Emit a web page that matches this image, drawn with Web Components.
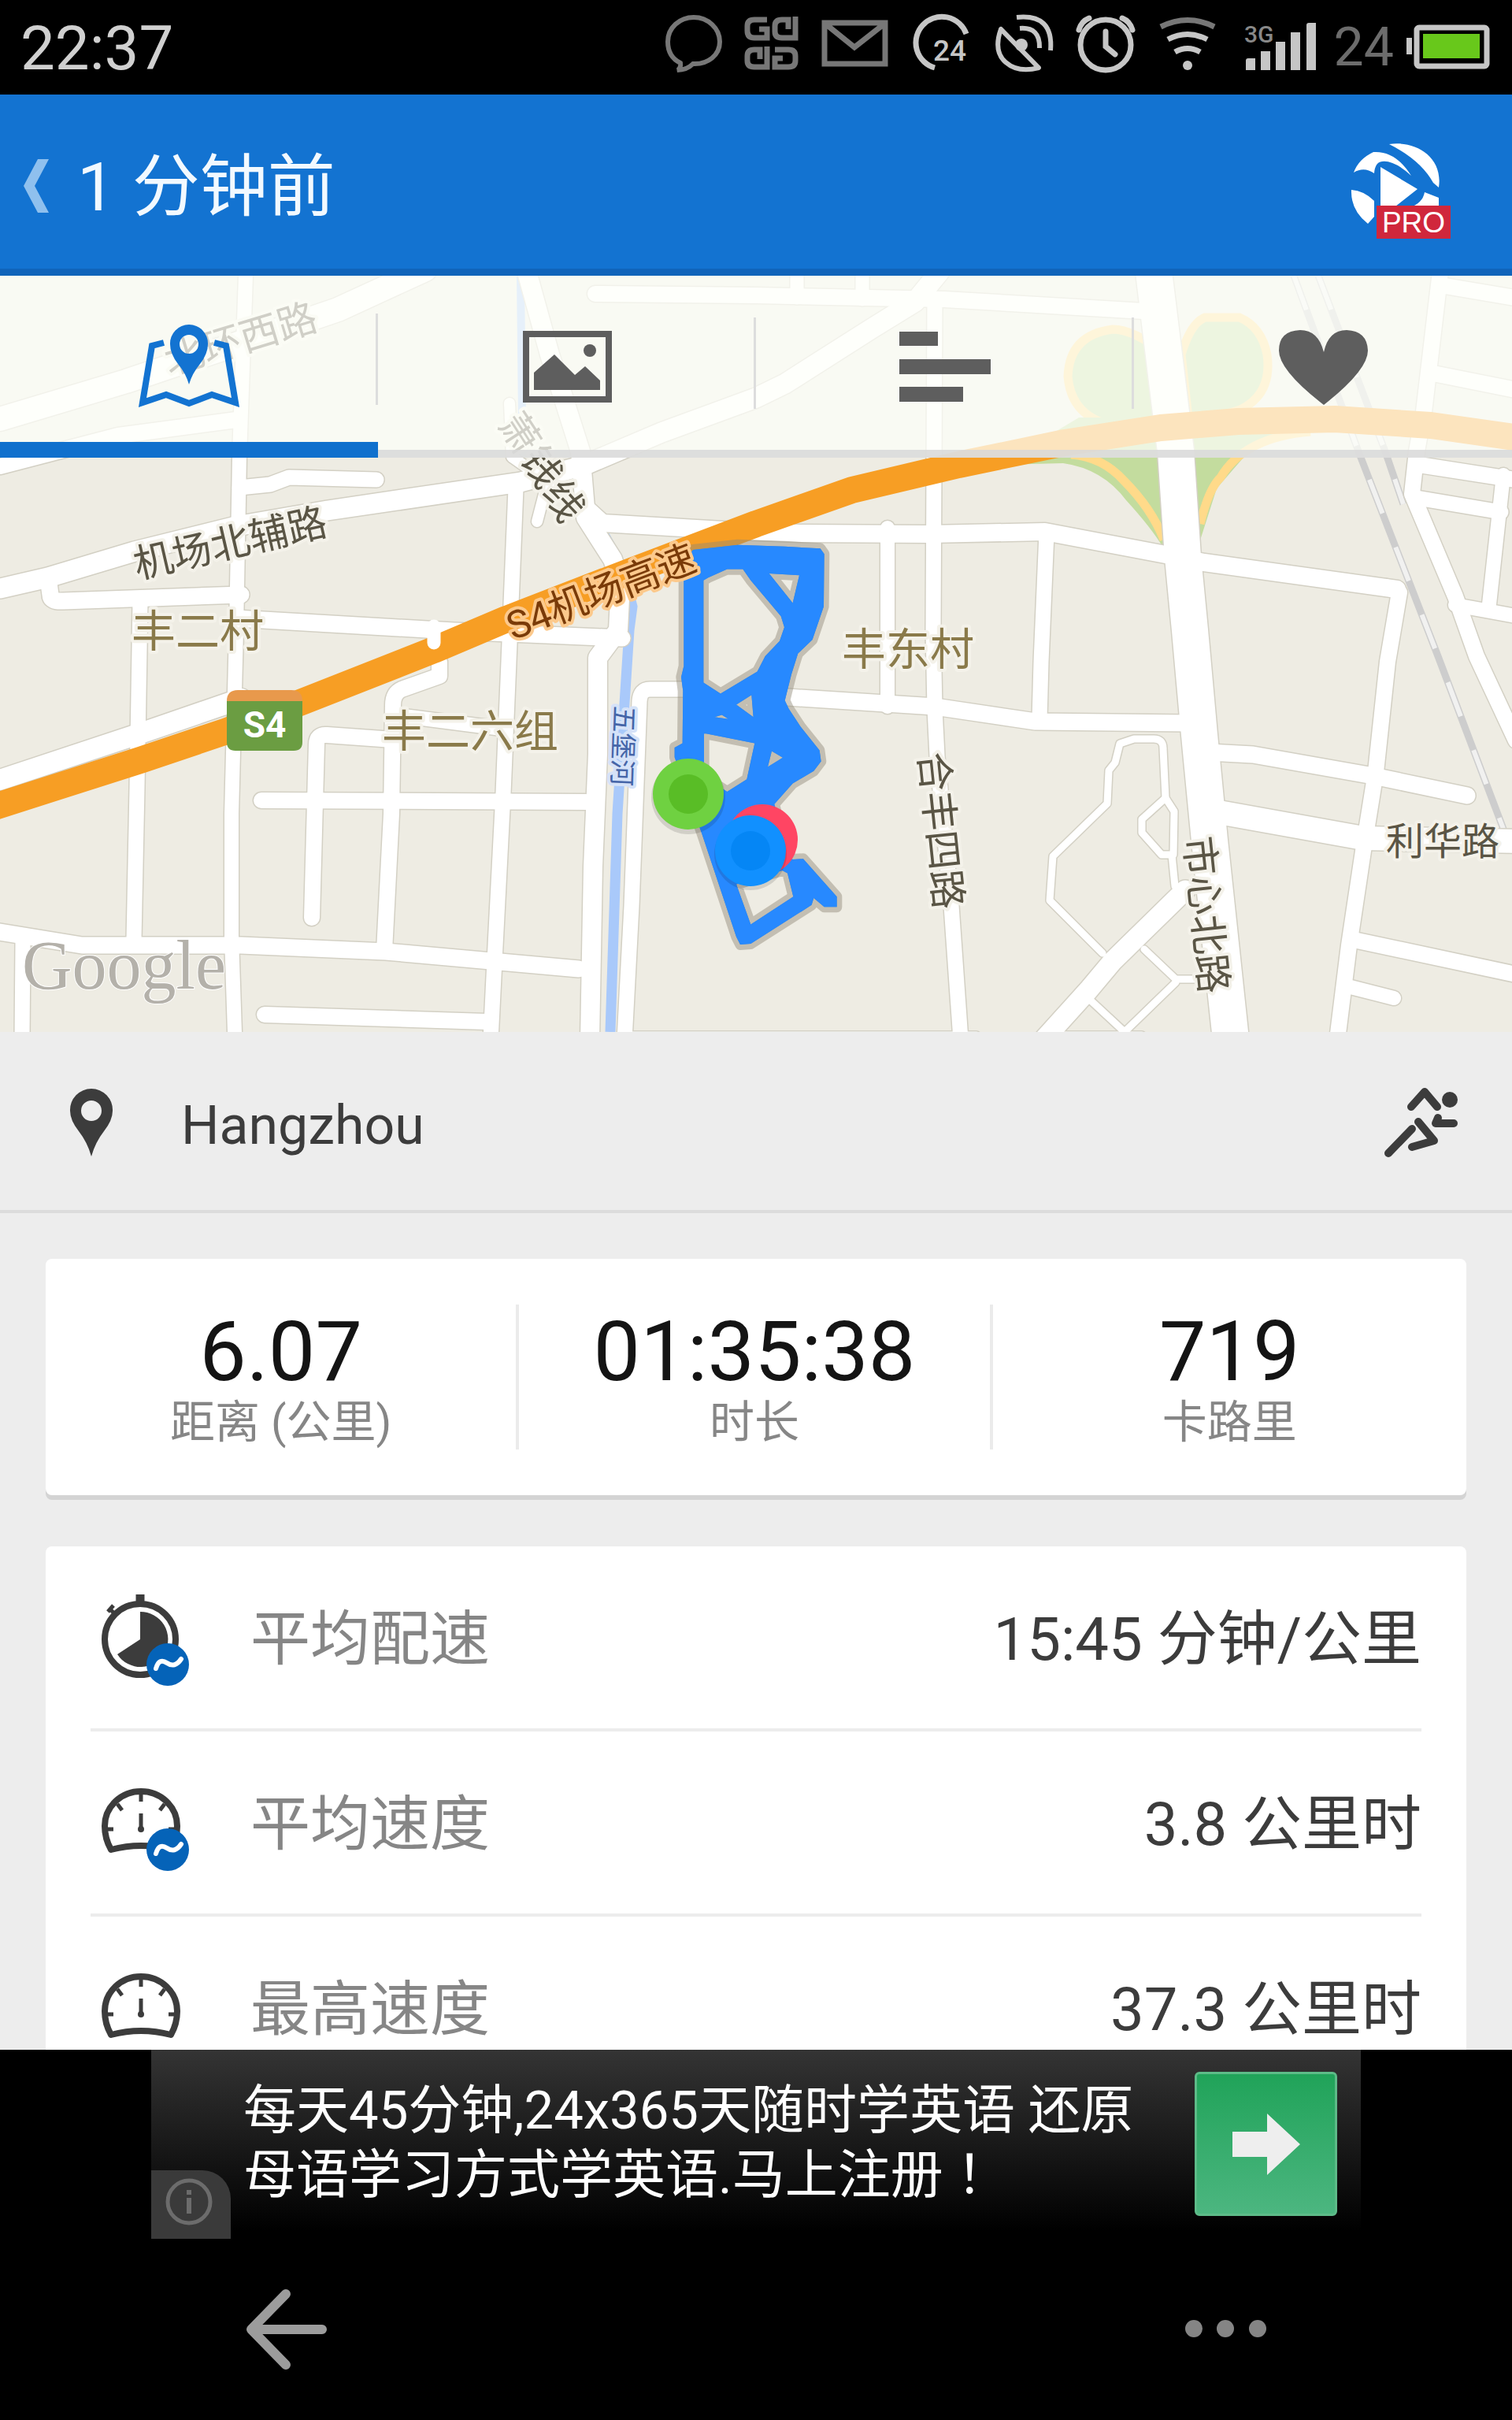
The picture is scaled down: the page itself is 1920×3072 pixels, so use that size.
<!DOCTYPE html>
<html lang="zh-CN">
<head>
<meta charset="utf-8">
<meta name="viewport" content="width=device-width, initial-scale=1">
<title>1 分钟前</title>
<style>
  body {
    margin: 0;
    background: #000;
    font-family: Roboto, "Noto Sans CJK SC", sans-serif;
  }

  /* keeps the full-width mark in the middle of its box */
  .mark {
    font-family: Roboto, "Noto Sans CJK TC", sans-serif;
  }
</style>
</head>
<body>

<workout-screen>
  <status-bar slot="top" time="22:37" battery="24"></status-bar>
  <title-bar slot="top">1 分钟前</title-bar>

  <route-map>
    <tab-strip></tab-strip>
  </route-map>

  <location-row>Hangzhou</location-row>

  <card-list>
    <stat-card>
      <stat-cell value="6.07">距离 (公里)</stat-cell>
      <stat-cell value="01:35:38">时长</stat-cell>
      <stat-cell value="719">卡路里</stat-cell>
    </stat-card>
    <detail-card>
      <detail-row icon="stopwatch" average value="15:45 分钟/公里">平均配速</detail-row>
      <detail-row icon="gauge" average value="3.8 公里时">平均速度</detail-row>
      <detail-row icon="gauge" value="37.3 公里时">最高速度</detail-row>
    </detail-card>
  </card-list>

  <ad-banner slot="bottom">每天45分钟,24x365天随时学英语 还原<br>母语学习方式学英语.马上注册<span class="mark" lang="zh-TW">！</span></ad-banner>
  <nav-keys slot="bottom"></nav-keys>
</workout-screen>

<script>
// name: [viewBox, markup]
const ICONS = {
  chat: ['832 0 104 120', `
    <path d="M881 22c-18 0-33 13-33 31 0 13 6 22 16 27 1 4-1 8-4 9 9 0 15-3 20-8 19 1 34-11 34-28s-15-31-33-31z" fill="none" stroke="#777" stroke-width="6"/>`],
  grid: ['936 0 104 120', `
    <g fill="none" stroke="#777" stroke-width="7">
      <path d="M974 25h-16q-9 0-9 8v6q0 9 9 9h16v-11h-10"/>
      <path d="M1010 21v27h-17q-9 0-9-8v-7q0-8 9-8h8v12"/>
      <path d="M974 59v26h-16q-9 0-9-8v-6q0-8 9-8h7v12"/>
      <path d="M984 63h17q9 0 9 8v6q0 8-9 8h-17v-11h10"/>
    </g>`],
  mail: ['1040 0 104 120', `
    <path d="M1047 29h77v52h-77zM1049 31l36 29 37-29" fill="none" stroke="#777" stroke-width="7"/>`],
  sync: ['1144 0 104 120', `
    <path d="M1187 86a33 33 0 1 1 40-43" fill="none" stroke="#c6c6c6" stroke-width="7"/>
    <text x="1185" y="77" font-size="37" font-weight="500" fill="#c6c6c6">24</text>`],
  dish: ['1248 0 104 120', `
    <g fill="none" stroke="#c6c6c6" stroke-width="6">
      <path d="M1271 37q-10 28 6 42t42 7z" stroke-linejoin="round"/>
      <path d="M1295 36q26-2 25 25M1291 22q47-5 43 42"/>
    </g>
    <circle cx="1297" cy="57" r="8" fill="#c6c6c6"/>`],
  alarm: ['1352 0 104 120', `
    <g fill="none" stroke="#c6c6c6" stroke-width="7">
      <circle cx="1404" cy="57" r="32"/>
      <path d="M1404 40v19l12 10M1370 38q3-11 13-15M1438 38q-3-11-13-15" stroke-linecap="round"/>
    </g>`],
  wifi: ['1456 0 104 120', `
    <g fill="none" stroke-width="7">
      <path d="M1474 34q34-17 68 0" stroke="#777"/>
      <path d="M1483 50q25-13 50 0M1492 66q16-9 32 0" stroke="#c6c6c6"/>
    </g>
    <ellipse cx="1508" cy="83" rx="6" ry="6" fill="#c6c6c6"/>`],
  signal: ['1560 0 130 120', `
    <path d="M1582 89v-12q0-3 3-3h9v15zM1601 89v-24h12v24zM1620 89v-36h12v36zM1639 89v-48h12v48zM1659 89v-57q0-3 3-3h9v60z" fill="#c6c6c6"/>
    <text x="1580" y="54" font-size="30" font-weight="500" fill="#888">3G</text>`],
  battery: ['1778 0 116 120', `
    <path d="M1786 48h7v21h-7z" fill="#c6c6c6"/>
    <rect x="1799" y="35" width="89" height="49" rx="3" fill="none" stroke="#c6c6c6" stroke-width="7"/>
    <path d="M1807 43h72v31h-72z" fill="#68c81b"/>`],
  back: ['0 0 40 68', `
    <path d="M20 0h14l-18 34 18 34h-14l-18-34z" fill="#8fc0ee"/>`],
  logo: ['1710 178 134 130', `
    <g fill="#fff">
      <path d="M1764 184c32-5 69 15 63 55l-7-6q-16-29-56-49z"/>
      <path d="M1719 220q6-17 25-26 28-2 48 30-22-20-37-18-9 1-10 15-13-9-26-1z"/>
      <path d="M1716 242q16 1 29 14v20l-8 9q-22-17-21-43zM1794 263q13-6 15-18l18 7v11zM1753 213l47 28-28 22h-19z"/>
    </g>
    <path d="M1748 262h94v42h-94z" fill="#d0273c"/>
    <text x="1795" y="296" font-size="37" font-weight="500" fill="#fff" text-anchor="middle">PRO</text>`],
  map: ['175 408 130 116', `
    <path d="M208 435l-15 4-12 72 30-10 29 11 29-11 30 10-12-72-15-4" fill="none" stroke="#1373d1" stroke-width="8"/>
    <path d="M240 412a24 24 0 0 0-24 25q0 12 10 25 10 12 14 26 4-14 14-26 10-13 10-25a24 24 0 0 0-24-25zm0 13a12 12 0 1 1 0 24 12 12 0 0 1 0-24z" fill="#1373d1" fill-rule="evenodd"/>`],
  photo: ['655 408 130 116', `
    <path d="M668 424h105v83h-105z" fill="none" stroke="#5e5e5e" stroke-width="8"/>
    <path d="M678 495v-22l26-23 26 26 13-11 19 18v12z" fill="#5e5e5e"/>
    <circle cx="749" cy="445" r="8" fill="#5e5e5e"/>`],
  bars: ['1135 408 130 116', `
    <path d="M1142 421h49v18h-49zM1142 456h116v19h-116zM1142 491h81v19h-81z" fill="#5e5e5e"/>`],
  heart: ['1615 408 130 116', `
    <path d="M1681 514q-57-44-57-69 0-25 27-26 23 0 30 28 6-28 29-28 26 1 27 26 0 25-56 69z" fill="#5e5e5e"/>`],
  pin: ['88 1380 56 90', `
    <path d="M116 1382a27 27 0 0 0-27 28q0 12 11 26 11 14 16 32 5-18 16-32 11-14 11-26a27 27 0 0 0-27-28zm0 15a13 13 0 1 1 0 26 13 13 0 0 1 0-26z" fill="#3c3c3c" fill-rule="evenodd"/>`],
  runner: ['1756 1380 98 92', `
    <circle cx="1841" cy="1397" r="10" fill="#3c3c3c"/>
    <g fill="none" stroke="#3c3c3c" stroke-width="10" stroke-linecap="round" stroke-linejoin="round">
      <path d="M1792 1406l17-19 16 19M1763 1465l30-31M1801 1425l20 24-28 8"/>
      <path d="M1826 1420l-3 7h23"/>
    </g>`],
  stopwatch: ['125 2020 118 124', `
    <g fill="none" stroke="#3c3c3c" stroke-width="8">
      <circle cx="178" cy="2082" r="45"/>
      <path d="M178 2040v-15" stroke-width="11"/>
      <path d="M145 2049l-6-6M137 2047l7-8" stroke-width="5"/>
    </g>
    <path d="M178 2082v-35a35 35 0 1 1-29 54z" fill="#3c3c3c"/>`],
  gauge: ['125 2255 118 124', `
    <g fill="none" stroke="#3c3c3c" stroke-width="8" stroke-linejoin="round">
      <path d="M141 2349q-8-14-8-30a45 43 0 0 1 92 0q0 16-8 30-38-10-76 0z"/>
      <path d="M179 2278v10M132 2323h12M226 2323h-12M149 2291l6 8M209 2291l-6 8" stroke-width="5"/>
      <path d="M179 2303v22" stroke-width="5"/>
    </g>
    <circle cx="179" cy="2323" r="4" fill="#3c3c3c"/>`],
  info: ['0 0 62 62', `
    <circle cx="31" cy="31" r="27" fill="none" stroke="#6c6c6c" stroke-width="5"/>
    <path d="M28 26h6v20h-6zM28 16h6v6h-6z" fill="#6c6c6c"/>`],
  go: ['0 0 86 78', `
    <path d="M0 23h44v-23l42 39-42 39v-23h-44z" fill="#eee"/>`],
  arrow: ['0 0 104 104', `
    <path d="M52 7l-44 45 44 45M10 52h88" fill="none" stroke="#9c9c9c" stroke-width="12" stroke-linecap="round" stroke-linejoin="round"/>`],
  dots: ['0 0 104 24', `
    <g fill="#858585"><circle cx="11" cy="11" r="11"/><circle cx="51" cy="11" r="11"/><circle cx="92" cy="11" r="11"/></g>`]
};

function icon(name) {
  const [box, markup] = ICONS[name];
  const [, , width, height] = box.split(' ');
  return `<svg viewBox="${box}" width="${width}" height="${height}" aria-hidden="true">${markup}</svg>`;
}

function define(name, render) {
  customElements.define(name, class extends HTMLElement {
    connectedCallback() {
      if (!this.shadowRoot) {
        this.attachShadow({ mode: 'open' }).innerHTML = render(this);
      }
    }
  });
}

define('workout-screen', () => `
  <style>
    :host { display: flex; flex-direction: column; height: 100vh; overflow: hidden; }
    main { flex: 1; min-height: 0; overflow: hidden; background: #ededed; }
  </style>
  <slot name="top"></slot>
  <main><slot></slot></main>
  <slot name="bottom"></slot>
`);

define('status-bar', el => `
  <style>
    :host { display: flex; align-items: center; height: 120px; padding: 0 26px; background: #000; color: #d0d0d0; }
    svg { display: block; }
    time { flex: 1; font-size: 78px; line-height: 116px; padding-top: 4px; }
    span { margin-left: 4px; font-size: 68px; line-height: 120px; color: #6c6c6c; }
    .battery { margin-left: 8px; }
  </style>
  <time>${el.getAttribute('time')}</time>
  ${['chat', 'grid', 'mail', 'sync', 'dish', 'alarm', 'wifi', 'signal'].map(icon).join('')}
  <span>${el.getAttribute('battery')}</span>
  <div class="battery">${icon('battery')}</div>
`);

define('title-bar', () => `
  <style>
    :host {
      display: flex; align-items: center; box-sizing: border-box; height: 230px; padding: 10px 76px 0 28px;
      background: #1373d1; border-bottom: 9px solid #1064ba; color: #f2f9ff;
    }
    button { padding: 0; border: 0; background: none; }
    svg { display: block; }
    h1 { flex: 1; margin: 0 0 0 30px; padding-top: 4px; font-size: 86px; font-weight: 400; line-height: 120px; }
    .logo { margin-top: 12px; }
  </style>
  <button aria-label="返回">${icon('back')}</button>
  <h1><slot></slot></h1>
  <button class="logo" aria-label="升级">${icon('logo')}</button>
`);

define('tab-strip', () => `
  <style>
    :host {
      display: grid; grid-template-columns: repeat(4, 1fr); height: 231px;
      background: rgba(253, 255, 250, .72);
    }
    button {
      display: grid; place-items: center; box-sizing: border-box; padding: 10px 0 0; border: 0;
      border-bottom: 10px solid rgba(216, 216, 216, .85);
      background: linear-gradient(#ddd, #ddd) right / 3px 116px no-repeat;
    }
    button:last-child { background: none; }
    button[aria-selected=true] { border-bottom: 20px solid #1070cd; padding-top: 20px; }
    svg { display: block; }
  </style>
  <button role="tab" aria-selected="true" aria-label="地图">${icon('map')}</button>
  <button role="tab" aria-label="照片">${icon('photo')}</button>
  <button role="tab" aria-label="图表">${icon('bars')}</button>
  <button role="tab" aria-label="心率">${icon('heart')}</button>
`);

// [path, width]
const ROADS = [
  ['M312 350L304 580 300 800 294 1033V1190L298 1310', 18],
  ['M0 532L160 484 300 437 429 393 540 342', 30],
  ['M0 592L150 553 300 533', 20],
  ['M0 747L61 733 171 700 300 668 416 648 661 612 741 591 840 549 960 505 997 487 1107 417 1162 383 1193 345', 25],
  ['M304 619L343 615 367 606 478 609', 19],
  ['M669 345L698 450 737 573 744 657 778 710 788 740 785 800 759 835V957L753 1100 749 1320', 24],
  ['M647 512L650 580 700 615', 14],
  ['M695 612L682 662', 14],
  ['M744 645L765 664 918 673 1015 677 1180 678 1327 675 1480 704 1529 714 1774 748', 22],
  ['M1760 745L1777 752 1762 840 1747 980 1733 1067 1713 1200 1698 1320', 20],
  ['M655 620L646 840 639 1007 628 1220 623 1320', 19],
  ['M61 733L64 755Q64 764 80 763L306 755', 21],
  ['M178 763L174 1000 170 1193', 19],
  ['M300 785L420 792 576 801 790 810', 21],
  ['M0 990L178 931 306 887', 26],
  ['M558 840V858L510 875Q499 880 499 895L497 1033 488 1207', 20],
  ['M499 939L415 933Q402 932 402 945L396 1165', 20],
  ['M332 1016L744 1018', 20],
  ['M505 908L637 925', 18],
  ['M0 1183L104 1200H306L490 1208 735 1230', 21],
  ['M29 1197L28 1320', 19],
  ['M336 1288L618 1297', 20],
  ['M875 875H825Q813 875 812 890L802 1150 793 1320', 19],
  ['M756 373L960 375 1199 380 1470 396', 20],
  ['M1012 345V378M1095 345V380', 17],
  ['M1187 383L1185 800 1187 900 1190 960 1208 1150 1220 1320', 19],
  ['M1127 670V897', 18],
  ['M1329 677L1322 840 1320 913', 19],
  ['M1465 345L1493 573 1502 707 1511 800 1523 933 1536 1067 1563 1320', 46],
  ['M1000 885L1187 897 1315 916 1511 918', 21],
  ['M1535 955L1591 958 1744 985 1863 1010', 21],
  ['M1542 1030L1731 1064 1930 1068', 30],
  ['M1719 1193L1930 1238', 20],
  ['M1715 1253L1770 1267', 18],
  ['M1829 345L1808 523 1799 573 1793 627 1848 757 1875 833 1925 940', 20],
  ['M1829 362L1930 379', 20],
  ['M1815 473L1930 496', 20],
  ['M1802 590L1930 610', 20],
  ['M1799 632L1906 650', 19],
  ['M1909 603L1891 767', 18],
  ['M1848 768L1930 783', 18],
  ['M1480 1013L1477 950Q1477 938 1465 938L1440 938 1422 944 1416 968 1408 978 1406 1020 1337 1087 1333 1143 1400 1210', 9],
  ['M1480 1013L1450 1040V1057L1475 1085H1490L1491 1030ZM1488 1085L1492 1125', 9],
  ['M1505 1130L1413 1220 1382 1257 1325 1320', 25],
  ['M1453 1205L1493 1243H1520M1493 1247L1428 1310 1385 1270', 9],
  ['M790 1314H1240M1330 1314H1450', 9]
];

// [text, x, y, angle, size, class]
const LABELS = [
  ['机场北辅路', 292, 688, -13, 50, 'road'],
  ['萧', 661, 549, 57, 50, 'road'],
  ['钱', 689, 592, 57, 50, 'road'],
  ['线', 717, 635, 57, 50, 'road'],
  ['北环西路', 305, 429, -17, 50, 'road'],
  ['合丰四路', 1196, 1054, 84, 50, 'road'],
  ['市心北路', 1533, 1161, 84, 50, 'road'],
  ['利华路', 1832, 1067, 0, 48, 'road'],
  ['丰二村', 251, 800, 0, 56, 'place'],
  ['丰二六组', 597, 927, 0, 56, 'place'],
  ['丰东村', 1153, 823, 0, 56, 'place'],
  ['五堡河', 792, 947, 92, 34, 'river'],
  ['S4机场高速', 763, 751, -21, 49, 'highway']
];

define('route-map', () => `
  <style>
    :host { display: grid; height: 960px; overflow: hidden; }
    svg, slot { grid-area: 1 / 1; }
    svg { display: block; width: 100%; height: 960px; }
    slot { display: block; }
    .casing path { stroke: #d3d0c4; }
    .road { fill: #5a5545; stroke: #f4f2ea; }
    .place { fill: #8a7a4a; stroke: #f4f2ea; }
    .river { fill: #4565a8; stroke: #d5e2f8; }
    .highway { fill: #7a3b08; stroke: #fcc98c; }
    .label { paint-order: stroke; stroke-width: 8px; stroke-linejoin: round; text-anchor: middle; }
  </style>
  <svg viewBox="0 350 1920 960" preserveAspectRatio="xMidYMid slice" role="img" aria-label="路线">
    <path d="M0 350h1920v960H0z" fill="#eeece3"/>
    <g fill="none" stroke="#a9c9fa">
      <path d="M661 350L663 530" stroke-width="10"/>
      <path d="M765 675L790 720 803 770 799 800 784 1033 775 1310" stroke-width="13"/>
    </g>
    <g fill="#c3dc9e" stroke="#ffda8a" stroke-width="11">
      <path d="M1480 450Q1440 418 1413 418 1358 425 1356 478 1360 525 1405 538H1490z"/>
      <path d="M1500 450Q1512 410 1530 403H1574Q1602 415 1609 450 1616 500 1575 520L1510 540z"/>
    </g>
    <path d="M1270 590L1350 588Q1400 595 1430 635 1462 670 1477 695H1521L1545 620 1591 567 1664 548V530H1370z" fill="#c3dc9e"/>
    <path d="M1360 577Q1400 580 1427 610 1462 645 1478 685M1524 665Q1535 620 1550 606 1580 555 1664 548" fill="none" stroke="#ffda8a" stroke-width="11"/>
    <g fill="none">
      <path d="M1643 350L1725 573 1826 833 1912 1060M1674 350L1759 573 1782 640" stroke="#cdcdcd" stroke-width="9"/>
      <path d="M1643 350L1725 573 1826 833 1912 1060M1674 350L1759 573 1782 640" stroke="#f1f1f0" stroke-width="6" stroke-dasharray="46 46"/>
    </g>
    <g class="casing" fill="none" stroke-linecap="round" stroke-linejoin="round">
      ${ROADS.map(([d, width]) => `<path d="${d}" stroke-width="${width + 3}"/>`).join('')}
    </g>
    <g fill="none" stroke="#fff" stroke-linecap="round" stroke-linejoin="round">
      ${ROADS.map(([d, width]) => `<path d="${d}" stroke-width="${width}"/>`).join('')}
    </g>
    <path d="M-10 1025L178 965 288 928 386 890 551 825 643 786 796 727 960 665 1082 622 1217 590 1352 562 1474 543 1572 535 1695 532 1817 540 1930 556" fill="none" stroke="#f79e24" stroke-width="34" stroke-linejoin="round"/>
    <path d="M551 795V816" stroke="#fff" stroke-width="17" stroke-linecap="round"/>

    <path d="M288 890q0-14 14-14h68q14 0 14 14z" fill="#e8994c"/>
    <path d="M288 890h96v52q0 11-11 11h-74q-11 0-11-11z" fill="#6b9d42"/>
    <text x="336" y="936" font-size="46" font-weight="700" fill="#fff" text-anchor="middle">S4</text>

    <g transform="translate(820 670) scale(.3333 .3508)" fill="#2789ff" fill-rule="evenodd" stroke-linejoin="round">
      ${['stroke="#8d8775" stroke-opacity=".45" stroke-width="40"', ''].map(attrs => `
      <path ${attrs} d="M145 190L150 120 180 80 350 62 530 68 665 75 680 95 678 285 635 405 580 455 555 530 530 625 545 655 590 720 662 805 668 845 640 880 560 925 490 1000 540 1180 560 1200 600 1198 728 1335V1372H680L640 1340 632 1365 400 1505 360 1508 345 1480 215 1110 110 830V795L140 780 142 590 135 540 145 500z
        M238 180L310 150H370L400 190 515 320 528 360 510 410 455 465 425 520 285 600 220 560V190z
        M470 165L585 172 560 272zM345 640L403 605 410 685zM262 685L290 677 315 692z
        M230 745L415 780 385 910 310 955 222 900V745zM480 808L522 832 465 865z
        M520 1240L540 1250 562 1335 400 1435 345 1290z"/>`).join('')}
    </g>

    ${LABELS.map(([text, x, y, angle, size, kind]) => `
    <text class="label ${kind}" font-size="${size}" dy="${Math.round(size * .37)}"
      transform="translate(${x} ${y}) rotate(${angle})">${text}</text>`).join('')}
    <text x="28" y="1255" font-family="Liberation Serif, serif" font-size="88" fill="#b4b1aa" stroke="#fff" stroke-width="2" paint-order="stroke">Google</text>

    <circle cx="874" cy="1012" r="47" fill="#000" opacity=".12"/>
    <circle cx="874" cy="1008" r="45" fill="#6fd141"/>
    <circle cx="874" cy="1008" r="25" fill="#59bd26"/>
    <circle cx="968" cy="1066" r="45" fill="#ff4563"/>
    <circle cx="953" cy="1084" r="46" fill="#000" opacity=".12"/>
    <circle cx="953" cy="1080" r="45" fill="#1190ff"/>
    <circle cx="953" cy="1080" r="25" fill="#0586f5"/>
  </svg>
  <slot></slot>
`);

define('location-row', () => `
  <style>
    :host {
      display: flex; align-items: center; box-sizing: border-box; height: 230px; padding: 4px 66px 0 88px;
      border-bottom: 4px solid #dcdcdc; color: #3c3c3c; font-size: 68px; line-height: 80px;
    }
    span { flex: 1; margin-left: 86px; padding-top: 8px; }
    svg { display: block; }
  </style>
  ${icon('pin')}
  <span><slot></slot></span>
  ${icon('runner')}
`);

define('card-list', () => `
  <style>
    :host { display: flex; flex-direction: column; gap: 65px; padding: 58px; }
  </style>
  <slot></slot>
`);

define('stat-card', () => `
  <style>
    :host {
      display: grid; grid-template-columns: repeat(3, 1fr); box-sizing: border-box; height: 300px; padding: 58px 0;
      background: #fff; border-radius: 8px; box-shadow: 0 6px 0 #d4d4d4;
    }
    ::slotted(:not(:last-child)) { border-right: 4px solid #ebebeb; }
  </style>
  <slot></slot>
`);

define('stat-cell', el => `
  <style>
    :host { display: flex; flex-direction: column; align-items: center; }
    strong { font-size: 106px; font-weight: 400; line-height: 120px; color: #141414; }
    span { font-size: 57px; line-height: 60px; color: #868686; }
  </style>
  <strong>${el.getAttribute('value')}</strong>
  <span><slot></slot></span>
`);

define('detail-card', () => `
  <style>
    :host { display: block; padding: 0 57px; background: #fff; border-radius: 8px; }
    ::slotted(:not(:last-child)) { border-bottom: 4px solid #ececec; }
  </style>
  <slot></slot>
`);

define('detail-row', el => `
  <style>
    :host {
      display: flex; align-items: center; box-sizing: content-box; height: 227px; padding-top: 4px;
      font-size: 76px; line-height: 100px;
    }
    .icon { display: grid; margin-left: 10px; }
    .icon svg { grid-area: 1 / 1; }
    .label { flex: 1; margin-left: 75px; color: #868686; }
    .value { color: #3c3c3c; }
  </style>
  <div class="icon">
    ${icon(el.getAttribute('icon'))}
    ${el.hasAttribute('average') ? `
    <svg viewBox="125 2020 118 124" width="118" height="124" aria-hidden="true">
      <circle cx="213" cy="2114" r="27" fill="#0563b8"/>
      <path d="M198 2119q4-14 14-7t18-5" fill="none" stroke="#fff" stroke-width="6" stroke-linecap="round"/>
    </svg>` : ''}
  </div>
  <span class="label"><slot></slot></span>
  <span class="value">${el.getAttribute('value')}</span>
`);

define('ad-banner', () => `
  <style>
    :host { display: flex; justify-content: center; height: 240px; background: #000; }
    .ad {
      display: grid; grid-template-columns: 101px 1fr 181px; column-gap: 16px; box-sizing: border-box;
      width: 80%; padding-right: 30px; background: linear-gradient(#343434, #000 96%);
    }
    .info {
      display: grid; place-items: center; align-self: end; box-sizing: border-box; height: 87px;
      padding: 0 6px 8px 0; border: 0; border-radius: 0 36px 0 0; background: #3a3a3a;
    }
    p { margin: 36px 0 0; font-size: 67px; line-height: 82px; color: #fff; white-space: nowrap; }
    .go {
      display: grid; place-items: center; box-sizing: border-box; height: 183px; margin-top: 28px; padding: 0;
      border: 3px solid #5dbb88; border-radius: 6px; background: linear-gradient(#20a359, #4cb680);
    }
  </style>
  <div class="ad">
    <button class="info" aria-label="广告信息">${icon('info')}</button>
    <p><slot></slot></p>
    <button class="go" aria-label="打开">${icon('go')}</button>
  </div>
`);

define('nav-keys', () => `
  <style>
    :host {
      display: flex; align-items: center; justify-content: space-between; height: 230px;
      padding: 0 311px; background: #000;
    }
    button { padding: 0; border: 0; background: none; }
    svg { display: block; }
  </style>
  <button aria-label="返回">${icon('arrow')}</button>
  <button aria-label="更多">${icon('dots')}</button>
`);
</script>
</body>
</html>
